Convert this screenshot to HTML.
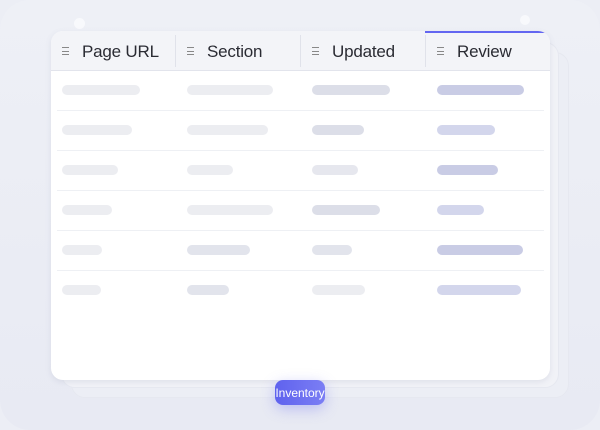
<!DOCTYPE html>
<html><head><style>
*{margin:0;padding:0;box-sizing:border-box}
body{width:600px;height:430px;overflow:hidden;background:#eceef5;font-family:"Liberation Sans",sans-serif;position:relative}
.frame{position:absolute;left:0;top:0;width:600px;height:430px;border-radius:30px;background:linear-gradient(180deg,#eef0f6,#e8eaf3)}
.dot{position:absolute;border-radius:50%;background:#f8f9fc}
.back2{position:absolute;left:71px;top:52px;width:498px;height:346px;border-radius:14px;background:#eceef5;border:1px solid #e6e8f0}
.back1{position:absolute;left:61px;top:42px;width:498px;height:346px;border-radius:14px;background:#f1f2f7;border:1px solid #e6e8f0}
.card{position:absolute;left:51px;top:31px;width:499px;height:349px;border-radius:12px;background:#fff;overflow:hidden;box-shadow:0 2px 6px rgba(120,125,160,.15)}
.head{position:absolute;left:0;top:0;width:499px;height:40px;background:#f3f4f8;border-bottom:1px solid #e2e4ec}
.th{position:absolute;top:0;height:39px;width:125px;font-size:17px;color:#2a2b33;line-height:41px;padding-left:31px;letter-spacing:-0.2px}
.th:after{content:"";position:absolute;right:0;top:4px;height:32px;width:1px;background:#e0e2ea}
.th .ic{position:absolute;left:11px;top:16px;width:7px;height:8px;border-top:1px solid #888;border-bottom:1px solid #888}
.th .ic:before{content:"";position:absolute;left:0;top:2.5px;width:7px;height:1px;background:#888}
.rv{position:absolute;left:374px;top:0;width:125px;height:2px;background:#6366f1}
.bar{position:absolute;height:10px;border-radius:5px}
.line{position:absolute;left:6px;width:487px;height:1px;background:#eef0f4}
.pill{position:absolute;left:275px;top:380px;width:50px;height:25px;border-radius:8px;background:linear-gradient(90deg,#5f62ee,#7b7ef4);color:#fff;font-size:12px;line-height:27px;text-align:center;box-shadow:0 4px 14px rgba(99,102,241,.35);white-space:nowrap;overflow:visible}
.pill span{display:inline-block;margin-left:-10px;margin-right:-10px}
</style></head><body>
<div class="frame"></div>
<div class="dot" style="left:74px;top:18px;width:11px;height:11px"></div>
<div class="dot" style="left:520px;top:15px;width:10px;height:10px"></div>
<div class="back2"></div><div class="back1"></div>
<div class="card">
<div class="head">
<div class="th" style="left:0"><span class="ic"></span>Page URL</div>
<div class="th" style="left:125px"><span class="ic"></span>Section</div>
<div class="th" style="left:250px"><span class="ic"></span>Updated</div>
<div class="th" style="left:375px"><span class="ic"></span>Review</div>
<div class="rv"></div>
</div>
<div class="line" style="top:79px"></div><div class="line" style="top:119px"></div><div class="line" style="top:159px"></div><div class="line" style="top:199px"></div><div class="line" style="top:239px"></div>
<div class="bar" style="top:54px;left:11px;width:78px;background:#ecedf1"></div>
<div class="bar" style="top:54px;left:136px;width:86px;background:#ecedf1"></div>
<div class="bar" style="top:54px;left:261px;width:78px;background:#dcdee8"></div>
<div class="bar" style="top:54px;left:386px;width:87px;background:#c9cce5"></div>
<div class="bar" style="top:94px;left:11px;width:70px;background:#ecedf1"></div>
<div class="bar" style="top:94px;left:136px;width:81px;background:#ecedf1"></div>
<div class="bar" style="top:94px;left:261px;width:52px;background:#dcdee8"></div>
<div class="bar" style="top:94px;left:386px;width:58px;background:#d3d6ec"></div>
<div class="bar" style="top:134px;left:11px;width:56px;background:#ecedf1"></div>
<div class="bar" style="top:134px;left:136px;width:46px;background:#ecedf1"></div>
<div class="bar" style="top:134px;left:261px;width:46px;background:#e6e7ee"></div>
<div class="bar" style="top:134px;left:386px;width:61px;background:#c9cce5"></div>
<div class="bar" style="top:174px;left:11px;width:50px;background:#ecedf1"></div>
<div class="bar" style="top:174px;left:136px;width:86px;background:#ecedf1"></div>
<div class="bar" style="top:174px;left:261px;width:68px;background:#dcdee8"></div>
<div class="bar" style="top:174px;left:386px;width:47px;background:#d3d6ec"></div>
<div class="bar" style="top:214px;left:11px;width:40px;background:#ecedf1"></div>
<div class="bar" style="top:214px;left:136px;width:63px;background:#e2e4ec"></div>
<div class="bar" style="top:214px;left:261px;width:40px;background:#e2e4ec"></div>
<div class="bar" style="top:214px;left:386px;width:86px;background:#c9cce5"></div>
<div class="bar" style="top:254px;left:11px;width:39px;background:#ecedf1"></div>
<div class="bar" style="top:254px;left:136px;width:42px;background:#e2e4ec"></div>
<div class="bar" style="top:254px;left:261px;width:53px;background:#ecedf1"></div>
<div class="bar" style="top:254px;left:386px;width:84px;background:#d3d6ec"></div>
</div>
<div class="pill"><span>Inventory</span></div>
</body></html>
